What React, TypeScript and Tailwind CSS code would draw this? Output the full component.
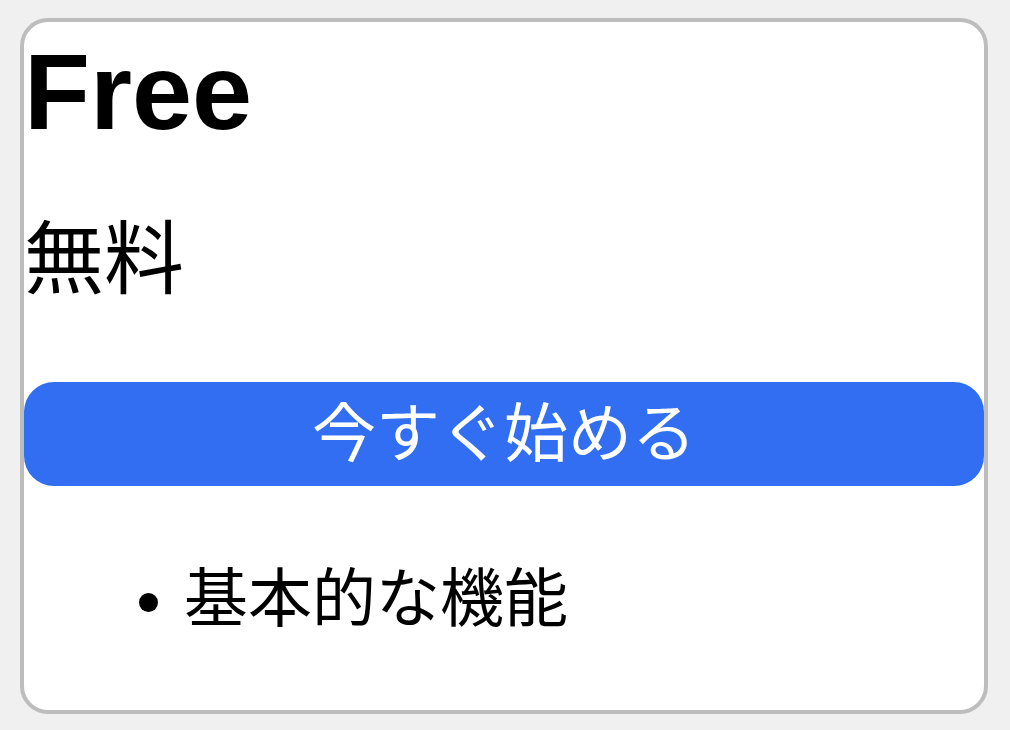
const features = ["基本的な機能"];

export default function App() {
  return (
    <div className="min-h-screen bg-[#f0f0f0] pt-[18px] pl-[20px] font-['Liberation_Sans','Noto_Sans_CJK_JP',sans-serif] text-black">
      <div className="w-[968px] rounded-[28px] border-4 border-[#bdbdbd] bg-white pb-[79px]">
        <h1 className="mt-[7px] text-[108px] font-bold leading-[126px]">Free</h1>
        <p className="mt-[65px] text-[80px] leading-[80px]">無料</p>
        <button
          type="button"
          className="mt-[82px] flex h-[104px] w-full items-center justify-center rounded-[30px] bg-[#316ef2] text-[64px] leading-[64px] text-white"
        >
          今すぐ始める
        </button>
        <ul className="mt-[81px] list-disc pl-[160px] text-[64px] leading-[64px]">
          {features.map((f) => (
            <li key={f}>{f}</li>
          ))}
        </ul>
      </div>
    </div>
  );
}
